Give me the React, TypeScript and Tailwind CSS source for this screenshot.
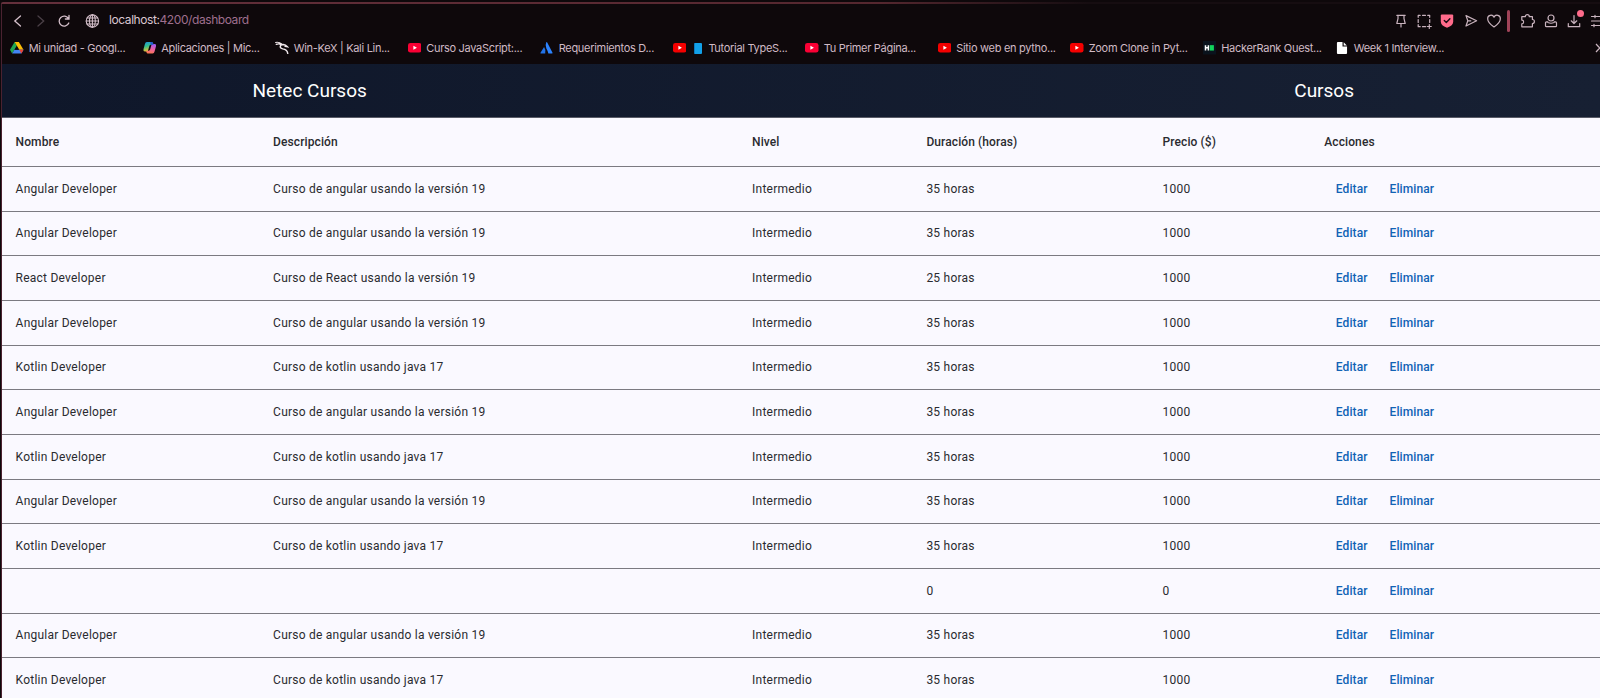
import React from "react";

type Bookmark = { icon: string; label: string; book?: boolean };

const bookmarks: Bookmark[] = [
  { icon: "drive", label: "Mi unidad - Googl..." },
  { icon: "copilot", label: "Aplicaciones | Mic..." },
  { icon: "kali", label: "Win-KeX | Kali Lin..." },
  { icon: "yt2", label: "Curso JavaScript:..." },
  { icon: "atlassian", label: "Requerimientos D..." },
  { icon: "yt", label: "Tutorial TypeS...", book: true },
  { icon: "yt2", label: "Tu Primer Página..." },
  { icon: "yt", label: "Sitio web en pytho..." },
  { icon: "yt", label: "Zoom Clone in Pyt..." },
  { icon: "hackerrank", label: "HackerRank Quest..." },
  { icon: "file", label: "Week 1 Interview..." },
];

const favicon = "h-[13.5px] w-[13.5px] shrink-0";

function Favicon({ kind }: { kind: string }) {
  switch (kind) {
    case "drive":
      return (
        <svg viewBox="0 0 14 14" className={favicon}>
          <path d="M4.800 1h4.400L7 5z" fill="#188038" />
          <path d="M4.800 1 0 9.200 2.200 13 7 4.800z" fill="#22a652" />
          <path d="M9.200 1 14 9.200H9.600L4.800 1z" fill="#fbbc04" />
          <path d="M2.200 13 4.600 9.200H14L11.800 13z" fill="#4285f4" />
          <path d="M11.800 13 14 9.200H9.600z" fill="#ea4335" />
          <path d="M7 5.600 4.900 9.200h4.200z" fill="#0e080b" />
        </svg>
      );
    case "copilot":
      return (
        <svg viewBox="0 0 14 14" className={favicon}>
          <defs>
            <linearGradient id="cpa" x1="0" y1="0" x2="0.3" y2="1">
              <stop offset="0" stopColor="#1a8fe8" />
              <stop offset="0.5" stopColor="#35c088" />
              <stop offset="1" stopColor="#f8c12c" />
            </linearGradient>
            <linearGradient id="cpb" x1="0.6" y1="0" x2="0.3" y2="1">
              <stop offset="0" stopColor="#a35cf0" />
              <stop offset="0.5" stopColor="#ee5fa0" />
              <stop offset="1" stopColor="#fb7a4b" />
            </linearGradient>
          </defs>
          <path d="M4 1h5q1 0 1.400 1.300L11 4H8Q7 4 6.500 5.500L5.200 10Q4.700 11 3.700 11H2Q0 11 .5 8.500L2 3Q2.500 1 4 1z" fill="url(#cpa)" />
          <path d="M10 13H5q-1 0-1.400-1.300L3.200 10H6q1 0 1.500-1.500L8.800 4Q9.300 3 10.300 3H12q2 0 1.500 2.500L12 11q-.5 2-2 2z" fill="url(#cpb)" />
          <path d="M7.500 1H9q1 0 1.400 1.300L11 4H8z" fill="#2257ce" />
        </svg>
      );
    case "kali":
      return (
        <svg viewBox="0 0 14 14" className={favicon} fill="none" stroke="#f1e9ed" strokeLinecap="round">
          <path d="M.6 1.500Q4 .8 7 3M1.200 3.500Q3.500 2.500 6 3.300" strokeWidth="1.200" />
          <path d="M4.500 2.500Q6 4.300 8.500 3.700Q11 3.800 12.800 5.900L10.500 5.500M6.500 3.800Q3.800 7 8 8.200Q12.500 8.800 13.200 12.800" strokeWidth="1.500" />
        </svg>
      );
    case "yt":
    case "yt2":
      return (
        <svg viewBox="0 0 14 14" className={favicon}>
          <rect x="0" y="2" width="14" height="10" rx="2.500" fill={kind === "yt" ? "#f40000" : "#f90034"} />
          <path d="M5.600 5 9.300 7 5.600 9z" fill="#fff" />
        </svg>
      );
    case "atlassian":
      return (
        <svg viewBox="0 0 14 14" className={favicon}>
          <path d="M4.200 6.200Q6.300 9 5.400 13H.8Q.2 13 .5 12.300z" fill="#2272e8" />
          <path d="M6.500 1.300Q7 .7 7.500 1.500L13 12.300q.2.700-.5.700H8.700Q8 10 6.600 7.700 5 4.800 6.500 1.300z" fill="#2c83ff" />
        </svg>
      );
    case "hackerrank":
      return (
        <svg viewBox="0 0 14 14" className={favicon}>
          <rect width="14" height="14" fill="#0a131d" />
          <path d="M2.600 4.300v5.600M5.600 4.300v5.600M2.600 7.100h3" stroke="#fff" strokeWidth="1.600" />
          <rect x="7.100" y="4.300" width="4.200" height="5.600" fill="#12d65c" />
        </svg>
      );
    default:
      return (
        <svg viewBox="0 0 14 14" className={favicon}>
          <path d="M3 1h4.800v4.800h4.700V12.500q0 1-1 1H3q-1 0-1-1V2q0-1 1-1z" fill="#fff" />
          <path d="M9 1.200 12.300 4.600H9z" fill="#fff" />
        </svg>
      );
  }
}

function Glyph({ children }: { children: React.ReactNode }) {
  return (
    <span className="flex w-[23.2px] shrink-0 justify-center">
      <svg
        viewBox="0 0 16 16"
        className="h-4 w-4 overflow-visible fill-none stroke-[#c9b3be]"
        strokeWidth="1.200"
        strokeLinecap="round"
        strokeLinejoin="round"
      >
        {children}
      </svg>
    </span>
  );
}

function Toolbar() {
  return (
    <div className="flex h-8 items-center">
      <svg
        viewBox="0 0 100 16"
        className="mt-px h-4 w-[100px] shrink-0 fill-none stroke-[#d5c0cb]"
        strokeWidth="1.300"
        strokeLinecap="round"
      >
        <path d="M18.500 3 12.800 8l5.700 5" />
        <path d="M36 3l5.700 5L36 13" stroke="#4b4047" />
        <path d="M66.500 5.600A5 5 0 1 0 66.800 10M67 2.400v3.600h-3.600" />
        <g strokeWidth="1.050">
          <circle cx="90.400" cy="8" r="6.200" />
          <ellipse cx="90.400" cy="8" rx="2.900" ry="6.200" />
          <path d="M90.400 1.800v12.400M84.200 8h12.400M85 5h10.800M85 11h10.800" />
        </g>
      </svg>
      <div className="ml-[7px] grow whitespace-nowrap font-['Inter',sans-serif] text-[12px] tracking-[-0.42px] text-[#dac6d1]">
        localhost:<span className="text-[#9f6f8e]">4200/dashboard</span>
      </div>
      <div className="mt-px flex w-[210.500px] shrink-0 items-center overflow-visible">
        <Glyph>
          <path d="M3.800 2.300h8.400M5 2.300v3.400L3.800 10.500h8.400L11 5.700V2.300M8 10.500v3.500" />
        </Glyph>
        <Glyph>
          <path d="M2.200 4.300v-2h2M6.500 2.300h3M11.700 2.300h2v2M2.200 6.500v3M13.700 6.500v3M2.200 11.700v2h2M6.500 13.700h3M13.300 11.500v4M11.300 13.500h4" />
        </Glyph>
        <Glyph>
          <path d="M2.800 1.500h10.400q1 0 1 1V8.500q0 4.200-6.200 6.200Q1.800 12.700 1.800 8.500V2.500q0-1 1-1z" fill="#ff6b8b" stroke="none" />
          <path d="M5.300 7.500l2 2 3.600-3.800" stroke="#1b0c12" strokeWidth="1.400" />
        </Glyph>
        <Glyph>
          <path d="M3 2.600 13.600 7.800 3 13 4.800 7.800zM4.800 7.800h3" />
        </Glyph>
        <Glyph>
          <path d="M8 13.900C3.300 10.600 1.700 8.500 1.700 5.900A3.300 3.300 0 0 1 8 4.200 3.300 3.300 0 0 1 14.300 5.900C14.300 8.500 12.700 10.600 8 13.900z" />
        </Glyph>
        <span className="ml-[1.500px] mr-[5.500px] h-[22px] w-[3.500px] shrink-0 rounded-sm bg-[#a04358]" />
        <Glyph>
          <path d="M1.800 3.700h3.500a2 2 0 0 1 4 0H12.400V6.500a2 2 0 0 1 0 4V13.800H1.800V10.800a1.800 1.800 0 0 0 0-3.700z" />
        </Glyph>
        <Glyph>
          <circle cx="8" cy="5" r="3" />
          <path d="M4.800 8.800H3.500q-1 0-1 1V12.700q0 1 1 1h9q1 0 1-1V9.800q0-1-1-1H11.200M5 9.500q3 1.500 6 0" />
        </Glyph>
        <Glyph>
          <path d="M8 2.500v8M5.200 7.800 8 10.500l2.800-2.700M2.300 10.500v3.200h11.400v-3.200" />
          <circle cx="14.500" cy=".600" r="3.500" fill="#ff6b8b" stroke="none" />
        </Glyph>
        <Glyph>
          <path d="M2.500 3.500H14M2.500 8H14M2.500 12.500H14M6 2.300v2.400M5 11.300v2.400" />
        </Glyph>
      </div>
    </div>
  );
}

function BookmarkBar() {
  return (
    <div className="flex h-6 items-center pl-[8px] font-['Inter',sans-serif] text-[11px] tracking-[-0.3px] text-[#d0bac5]">
      {bookmarks.map((b, i) => (
        <div key={i} className="flex w-[132.500px] shrink-0 items-center gap-[5.200px] whitespace-nowrap">
          <Favicon kind={b.icon} />
          {b.book && <span className="ml-[3px] mr-px h-[11px] w-[8px] rounded-[1px] border-l border-[#0c7cc0] bg-[#12a0e8]" />}
          <span>{b.label}</span>
        </div>
      ))}
      <svg viewBox="0 0 8 12" className="ml-[127.500px] h-3 w-2 shrink-0 fill-none stroke-[#c9b3be]" strokeWidth="1.200">
        <path d="M1 2 4.800 6 1 10M5 2 8.800 6 5 10" />
      </svg>
    </div>
  );
}

const A = ["Angular Developer", "Curso de angular usando la versión 19", "Intermedio", "35 horas", "1000"];
const K = ["Kotlin Developer", "Curso de kotlin usando java 17", "Intermedio", "35 horas", "1000"];
const R = ["React Developer", "Curso de React usando la versión 19", "Intermedio", "25 horas", "1000"];
const rows = [A, A, R, A, K, A, K, A, K, ["", "", "", "0", "0"], A, K];
const headings = ["Nombre", "Descripción", "Nivel", "Duración (horas)", "Precio ($)", "Acciones"];
const columns = "grid grid-cols-[257.500px_479px_174.300px_236.200px_161.700px_1fr] items-center border-b border-[#7b7a81] pl-[13.600px]";

function CourseTable() {
  return (
    <div className="bg-[#faf9ff] text-[12px] tracking-[0.23px] text-[#2a2b2f]">
      <div className={columns + " h-[49px] font-medium tracking-[0.1px]"}>
        {headings.map((h) => (
          <span key={h}>{h}</span>
        ))}
      </div>
      {rows.map((r, i) => (
        <div key={i} className={columns + " h-[44.670px]"}>
          {r.map((c, j) => (
            <span key={j}>{c}</span>
          ))}
          <span className="flex gap-[22px] pl-[11.500px] font-medium tracking-[0.1px] text-[#1163b5]">
            <span>Editar</span>
            <span>Eliminar</span>
          </span>
        </div>
      ))}
    </div>
  );
}

export default function App() {
  return (
    <div className="h-[698px] w-[1600px] overflow-hidden bg-[#0e080b] pl-px pt-[2px] font-['Roboto',sans-serif]">
      <div className="h-[2px] rounded-tl-full bg-linear-to-r from-[#65303c] from-0% via-[#55272f] via-55% to-[#160d11] to-68%" />
      <div className="border-l border-[#4a2230]">
        <Toolbar />
        <BookmarkBar />
        <div className="mt-[3.500px] flex h-[54.500px] items-center justify-between border-b border-[#5a5c68] bg-linear-to-r from-[#0f172a] to-[#172033] pl-[250.500px] pr-[246px] pt-[2px] text-[19px] text-white">
          <span>Netec Cursos</span>
          <span>Cursos</span>
        </div>
        <CourseTable />
      </div>
    </div>
  );
}
